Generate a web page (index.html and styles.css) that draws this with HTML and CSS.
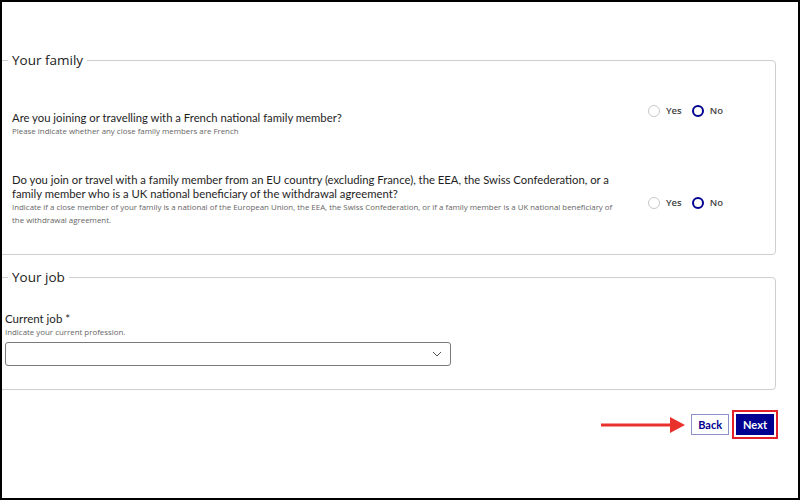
FILE: index.html
```html
<!DOCTYPE html>
<html lang="en">
<head>
<meta charset="utf-8">
<title>Application form</title>
<link rel="stylesheet" href="styles.css">
</head>
<body>
<div class="frame">
  <fieldset class="section section-family">
    <legend class="legend">Your family</legend>
    <div class="questions">
      <div class="question question-top">
        <div class="q-text">
          <p class="q-title">Are you joining or travelling with a French national family member?</p>
          <p class="q-hint">Please indicate whether any close family members are French</p>
        </div>
        <div class="radios">
          <span class="radio"><span class="dot"></span>Yes</span>
          <span class="radio"><span class="dot dot-on"></span>No</span>
        </div>
      </div>
      <div class="question">
        <div class="q-text">
          <p class="q-title">Do you join or travel with a family member from an EU country (excluding France), the EEA, the Swiss Confederation, or a family member who is a UK national beneficiary of the withdrawal agreement?</p>
          <p class="q-hint">Indicate if a close member of your family is a national of the European Union, the EEA, the Swiss Confederation, or if a family member is a UK national beneficiary of the withdrawal agreement.</p>
        </div>
        <div class="radios">
          <span class="radio"><span class="dot"></span>Yes</span>
          <span class="radio"><span class="dot dot-on"></span>No</span>
        </div>
      </div>
    </div>
  </fieldset>

  <fieldset class="section section-job">
    <legend class="legend legend-job">Your job</legend>
    <p class="field-label">Current job *</p>
    <p class="q-hint">Indicate your current profession.</p>
    <div class="select">
      <svg class="chevron" width="10" height="6" viewBox="0 0 10 6"><path d="M1 1 L5 5 L9 1" fill="none" stroke="#555" stroke-width="1"/></svg>
    </div>
  </fieldset>

  <div class="actions">
    <svg class="arrow" width="84" height="18" viewBox="0 0 84 18"><path d="M0 9 H70" stroke="#e8322b" stroke-width="3"/><path d="M69 1 L84 9 L69 17 Z" fill="#e8322b"/></svg>
    <button class="btn btn-back">Back</button>
    <button class="btn btn-next">Next</button>
  </div>
</div>
</body>
</html>
```
FILE: styles.css
```css
html, body {
  margin: 0;
  padding: 0;
  background: #fff;
}
.frame {
  width: 800px;
  height: 500px;
  box-sizing: border-box;
  border: 2px solid #000;
  overflow: hidden;
  background: #fff;
  font-family: "Lato", "Liberation Sans", sans-serif;
  color: #1e1e1e;
}
p { margin: 0; }
.section {
  margin: 0 22px 0 -12px;
  border: 1px solid #cfcfcf;
  border-radius: 4px;
  min-width: 0;
}
.section-family {
  margin-top: 48px;
  padding: 41px 0 27px 21px;
}
.section-job {
  margin-top: 12px;
  padding: 25px 0 23px 14px;
}
.legend {
  font-family: "Open Sans", "Liberation Sans", sans-serif;
  font-size: 13.5px;
  line-height: 20px;
  padding: 0 4px;
  margin-left: -4px;
  color: #222;
  font-weight: 400;
}
.legend-job {
  margin-left: 3px;
}
.questions {
  display: flex;
  flex-direction: column;
  gap: 35px;
}
.question {
  display: flex;
  align-items: center;
}
.question-top {
  align-items: flex-start;
}
.q-text {
  width: 612px;
}
.q-title {
  font-size: 11.3px;
  line-height: 14px;
  color: #1e1e1e;
}
.q-hint {
  font-family: "Open Sans", "Liberation Sans", sans-serif;
  font-size: 7.9px;
  line-height: 13px;
  color: #666;
}
.radios {
  display: flex;
  align-items: center;
  margin-left: 24px;
  gap: 10px;
  font-family: "Open Sans", "Liberation Sans", sans-serif;
  font-size: 9.5px;
  font-weight: 600;
  color: #444;
}
.question .radios {
  margin-top: 5px;
}
.question-top .radios {
  margin-top: -7px;
}
.radio {
  display: flex;
  align-items: center;
  gap: 6px;
}
.dot {
  width: 10px;
  height: 10px;
  border: 1px solid #c8c8c8;
  border-radius: 50%;
}
.dot-on {
  width: 8px;
  height: 8px;
  border: 2.5px solid #000091;
}
.field-label {
  font-size: 11.5px;
  line-height: 14px;
  color: #1e1e1e;
}
.select {
  margin-top: 3px;
  width: 446px;
  height: 24px;
  box-sizing: border-box;
  border: 1px solid #7a7a7a;
  border-radius: 3px;
  display: flex;
  align-items: center;
  justify-content: flex-end;
  padding-right: 8px;
}
.actions {
  display: flex;
  justify-content: flex-end;
  align-items: center;
  margin-top: 24px;
  padding-right: 24px;
  gap: 7px;
}
.arrow {
  margin-right: -1px;
}
.btn {
  font-family: "Lato", "Liberation Sans", sans-serif;
  font-size: 11px;
  font-weight: 700;
  height: 21px;
  padding: 0 6px;
  border-radius: 0;
  cursor: pointer;
}
.btn-back {
  background: #fff;
  color: #000091;
  border: 1px solid #8f8fc8;
}
.btn-next {
  background: #000091;
  color: #fff;
  border: 1px solid #000091;
  outline: 2px solid #e3202a;
  outline-offset: 2px;
}
```
